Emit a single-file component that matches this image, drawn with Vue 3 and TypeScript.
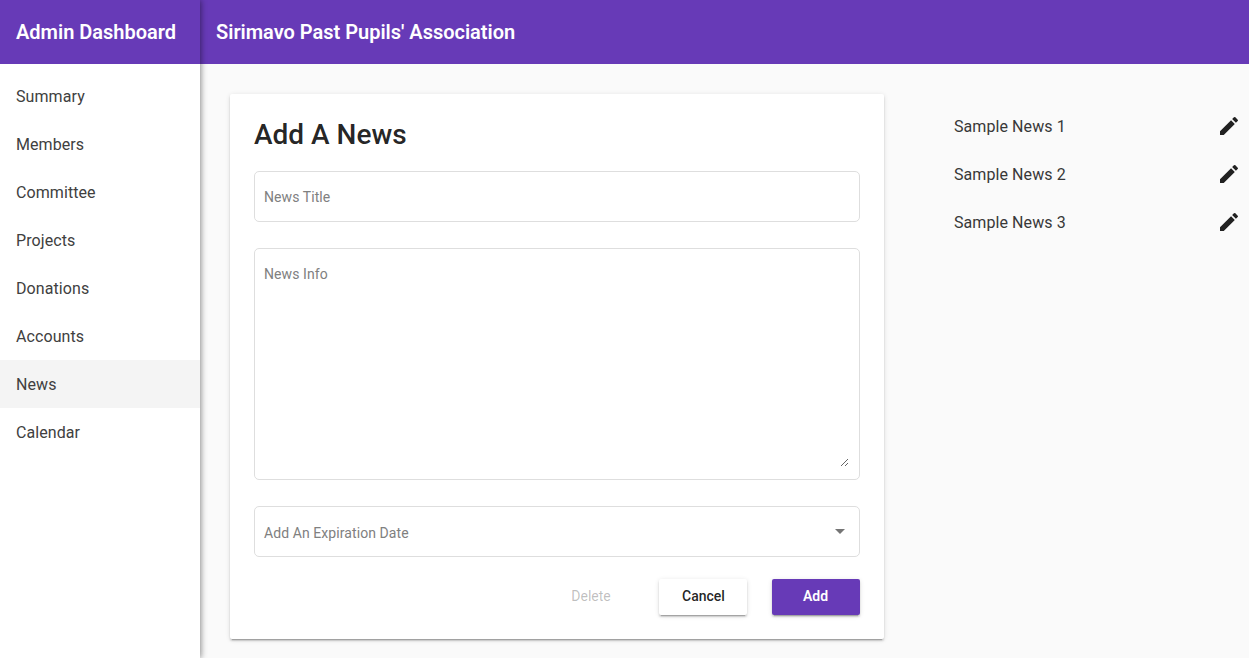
<script setup lang="ts">
import { ref } from 'vue'

const links: string[] = ['Summary', 'Members', 'Committee', 'Projects', 'Donations', 'Accounts', 'News', 'Calendar']
const active = ref('News')
const news: string[] = ['Sample News 1', 'Sample News 2', 'Sample News 3']
const title = ref('')
const info = ref('')
</script>

<template>
  <div class="layout">
    <aside class="sidenav">
      <div class="toolbar"><span class="brand">Admin Dashboard</span></div>
      <nav class="nav">
        <a v-for="link in links" :key="link" class="nav-item" :class="{ active: link === active }" @click="active = link">{{ link }}</a>
      </nav>
    </aside>
    <div class="content">
      <header class="toolbar"><span class="org">Sirimavo Past Pupils' Association</span></header>
      <main class="main">
        <section class="card">
          <h1 class="heading">Add A News</h1>
          <div class="field"><input v-model="title" class="control" placeholder="News Title" /></div>
          <div class="field area"><textarea v-model="info" class="control" placeholder="News Info"></textarea></div>
          <div class="field date">
            <span class="label">Add An Expiration Date</span>
            <svg class="arrow" width="10" height="5" viewBox="0 0 10 5"><path d="M0 0h10L5 5z" fill="#757575" /></svg>
          </div>
          <div class="actions">
            <button class="btn" disabled>Delete</button>
            <button class="btn raised">Cancel</button>
            <button class="btn raised primary">Add</button>
          </div>
        </section>
        <ul class="news">
          <li v-for="item in news" :key="item" class="news-item">
            <span class="news-name">{{ item }}</span>
            <svg width="24" height="24" viewBox="0 0 24 24">
              <path d="M3 17.25V21h3.75L17.81 9.94l-3.75-3.75L3 17.25zM20.71 7.04a.996.996 0 0 0 0-1.41l-2.34-2.34a.996.996 0 0 0-1.41 0l-1.83 1.83 3.75 3.75 1.83-1.83z" fill="#212121" />
            </svg>
          </li>
        </ul>
      </main>
    </div>
  </div>
</template>

<style>
html,
body {
  margin: 0;
  overflow: hidden;
}
</style>

<style scoped>
.layout {
  display: flex;
  height: 100vh;
  background: #fafafa;
  color: rgba(0, 0, 0, 0.87);
  font-family: Roboto, 'Liberation Sans', sans-serif;
}
.sidenav {
  position: relative;
  z-index: 1;
  flex: none;
  width: 200px;
  background: #fff;
  box-shadow: 1px 0 6px rgba(0, 0, 0, 0.45);
}
.toolbar {
  display: flex;
  align-items: center;
  height: 64px;
  padding: 0 16px;
  background: #673ab7;
  color: #fff;
  font-size: 20px;
  font-weight: 600;
  letter-spacing: -0.01px;
  white-space: nowrap;
}
.nav {
  padding-top: 8px;
}
.nav-item {
  display: flex;
  align-items: center;
  height: 48px;
  padding: 0 16px;
  color: #404040;
  font-size: 16px;
  letter-spacing: 0.08px;
  cursor: pointer;
}
.nav-item.active {
  background: #f4f4f4;
}
.content {
  flex: 1;
  min-width: 0;
}
.main {
  display: flex;
  align-items: flex-start;
  padding: 30px 8px 0 30px;
}
.card {
  box-sizing: border-box;
  flex: none;
  width: 654px;
  height: 545px;
  padding: 25px 24px 24px;
  border-radius: 2px;
  background: #fff;
  box-shadow: 0 3px 1px -2px rgba(0, 0, 0, 0.2), 0 2px 2px 0 rgba(0, 0, 0, 0.14), 0 1px 5px 0 rgba(0, 0, 0, 0.12);
}
.heading {
  margin: 0 0 20px;
  font-size: 28px;
  line-height: 32px;
  font-weight: 500;
}
.field {
  box-sizing: border-box;
  display: flex;
  align-items: center;
  height: 51px;
  margin-bottom: 26px;
  padding: 0 9px;
  border: 1px solid #dedede;
  border-radius: 5px;
  font-size: 14px;
  letter-spacing: 0.08px;
}
.area {
  height: 232px;
  padding: 4px 10px 0 9px;
}
.control {
  box-sizing: border-box;
  width: 100%;
  padding: 0;
  border: 0;
  outline: 0;
  background: transparent;
  color: inherit;
  font: inherit;
  letter-spacing: inherit;
  line-height: 16px;
}
.control::placeholder {
  color: #808080;
  opacity: 1;
}
textarea.control {
  height: 202px;
  padding-top: 1px;
  resize: vertical;
}
.date {
  margin-bottom: 22px;
  padding-right: 14px;
  color: #808080;
}
.label {
  flex: 1;
  padding-top: 2px;
}
.actions {
  display: flex;
  justify-content: flex-end;
  gap: 24px;
}
.btn {
  width: 88px;
  height: 36px;
  padding: 0 0 2px;
  border: 0;
  border-radius: 2px;
  background: transparent;
  color: rgba(0, 0, 0, 0.87);
  font: 500 14px Roboto, 'Liberation Sans', sans-serif;
}
.btn:disabled {
  color: rgba(0, 0, 0, 0.26);
  font-weight: 400;
}
.raised {
  padding-left: 1px;
  background: #fff;
  box-shadow: 0 3px 1px -2px rgba(0, 0, 0, 0.2), 0 2px 2px 0 rgba(0, 0, 0, 0.14), 0 1px 5px 0 rgba(0, 0, 0, 0.12);
}
.primary {
  margin-left: 1px;
  padding-right: 2px;
  background: #673ab7;
  color: #fff;
  font-weight: 600;
}
.news {
  flex: 1;
  margin: 0;
  padding: 8px 0 0 70px;
  list-style: none;
}
.news-item {
  display: flex;
  align-items: center;
  justify-content: space-between;
  height: 48px;
  color: #383838;
  font-size: 16px;
  letter-spacing: 0.08px;
}
</style>
